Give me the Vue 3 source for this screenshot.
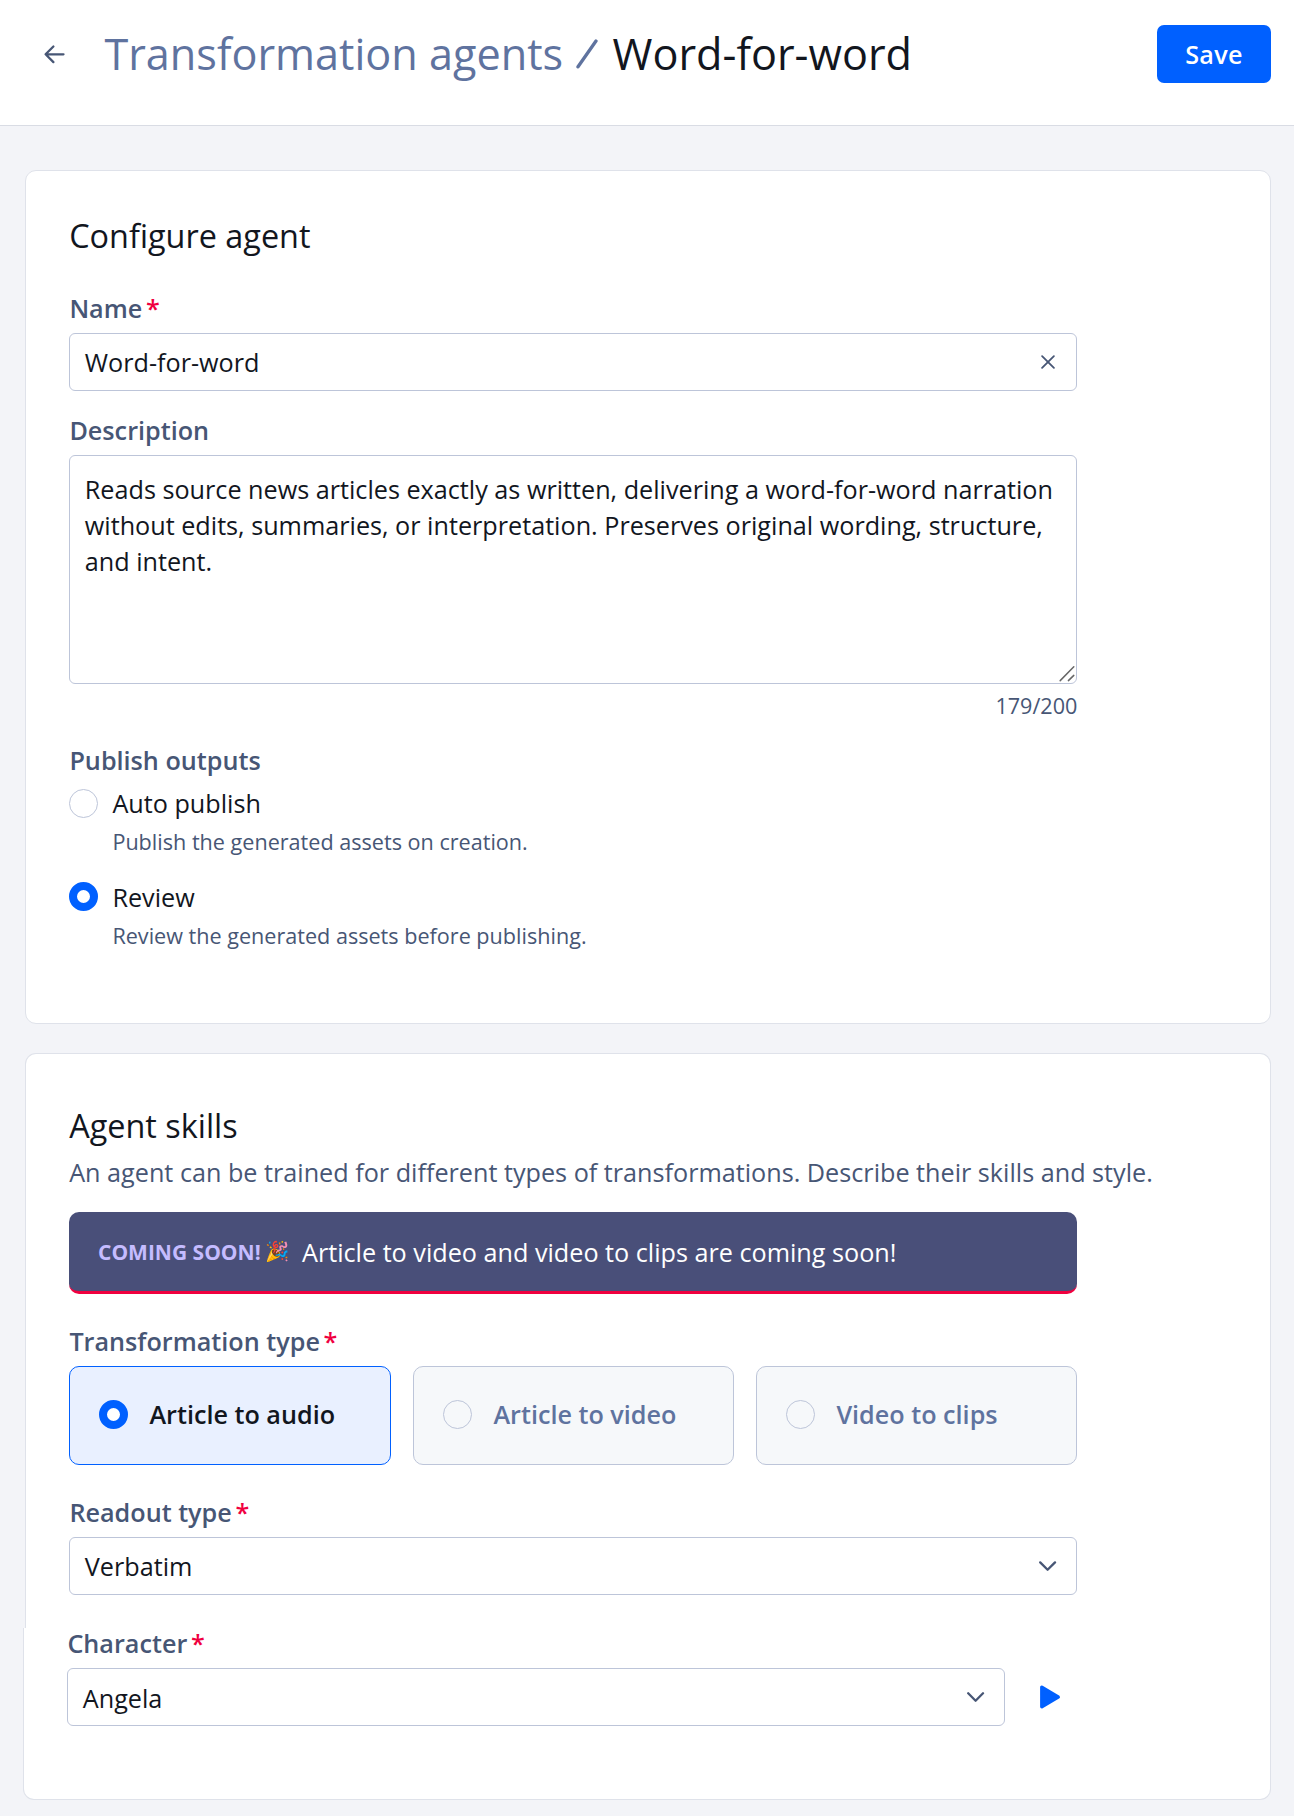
<script setup>
import { ref } from 'vue'

const name = ref('Word-for-word')
const description = ref(
  'Reads source news articles exactly as written, delivering a word-for-word narration without edits, summaries, or interpretation. Preserves original wording, structure, and intent.'
)

const publish = ref('review')
const publishOptions = [
  { id: 'auto', label: 'Auto publish', hint: 'Publish the generated assets on creation.' },
  { id: 'review', label: 'Review', hint: 'Review the generated assets before publishing.' }
]

const transformation = ref('audio')
const transformations = [
  { id: 'audio', label: 'Article to audio' },
  { id: 'video', label: 'Article to video' },
  { id: 'clips', label: 'Video to clips' }
]
</script>

<template>
  <div class="page">
    <header class="header">
      <svg class="back" width="24" height="24" viewBox="0 0 24 24">
        <path d="M21.5 12.3H3.6M11.4 4.5L3.6 12.3l7.8 7.8" />
      </svg>
      <h1 class="title">
        <span class="crumb">Transformation agents</span>
        <svg class="slash" width="22" height="30" viewBox="0 0 22 30">
          <path d="M2 27.8L20 2" />
        </svg>
        <span>Word-for-word</span>
      </h1>
      <button class="save">Save</button>
    </header>

    <main class="content">
      <section class="card configure">
        <h2>Configure agent</h2>
        <div class="label first">Name<span class="req">*</span></div>
        <div class="field">
          <span>{{ name }}</span>
          <svg class="clear" width="14" height="14" viewBox="0 0 14 14">
            <path d="M1.1 1.1l11.8 11.8M12.9 1.1L1.1 12.9" />
          </svg>
        </div>
        <div class="label desc-label">Description</div>
        <div class="area">
          {{ description }}
          <svg class="grip" width="16" height="17" viewBox="0 0 16 17">
            <path d="M1.2 15.6L14.8 1.8M9.4 15.6l5.4-5.2" />
          </svg>
        </div>
        <div class="counter">{{ description.length }}/200</div>

        <div class="label publish-label">Publish outputs</div>
        <div v-for="o in publishOptions" :key="o.id" class="option" @click="publish = o.id">
          <span class="radio" :class="{ on: publish === o.id }"></span>
          <div>
            <div class="option-label">{{ o.label }}</div>
            <div class="option-hint">{{ o.hint }}</div>
          </div>
        </div>
      </section>

      <section class="card skills">
        <h2>Agent skills</h2>
        <p class="sub">An agent can be trained for different types of transformations. Describe their skills and style.</p>
        <div class="banner">
          <span class="soon">COMING SOON!</span>
          <span class="party">🎉</span>
          <span class="news">Article to video and video to clips are coming soon!</span>
        </div>
        <div class="label type-label">Transformation type<span class="req">*</span></div>
        <div class="types">
          <div v-for="t in transformations" :key="t.id" class="type" :class="{ active: transformation === t.id }">
            <span class="radio" :class="{ on: transformation === t.id }"></span>
            <span>{{ t.label }}</span>
          </div>
        </div>
        <div class="label type-label">Readout type<span class="req">*</span></div>
        <div class="field">
          <span>Verbatim</span>
          <svg class="chevron" width="18" height="12" viewBox="0 0 18 12">
            <path d="M1.2 2.4l7.4 7.4L16 2.4" />
          </svg>
        </div>
      </section>

      <section class="card character">
        <div class="label">Character<span class="req">*</span></div>
        <div class="row">
          <div class="field">
            <span>Angela</span>
            <svg class="chevron" width="18" height="12" viewBox="0 0 18 12">
              <path d="M1.2 2.3l7.4 7.4L16 2.3" />
            </svg>
          </div>
          <svg class="play" width="20" height="24" viewBox="0 0 20 24">
            <path d="M1.8 2.2v19.6L18.2 12z" />
          </svg>
        </div>
      </section>
    </main>
  </div>
</template>

<style>
body {
  margin: 0;
  background: #f3f4f8;
}
</style>

<style scoped>
.page {
  min-height: 1816px;
  background: #f3f4f8;
  color: #12161e;
  font-family: "Open Sans", sans-serif;
  font-size: 25.2px;
  line-height: 36px;
  box-sizing: border-box;
}
.page * {
  box-sizing: border-box;
}
svg {
  display: block;
  flex: none;
  fill: none;
  stroke-linecap: round;
  stroke-linejoin: round;
}
.header {
  display: flex;
  align-items: center;
  height: 126px;
  padding: 25px 23px 42px 42px;
  border-bottom: 1px solid #d9dce4;
  background: #fff;
}
.back {
  stroke: #475675;
  stroke-width: 2.3;
}
.title {
  display: flex;
  align-items: center;
  margin: 0 0 0 38.4px;
  font-size: 43.2px;
  font-weight: 400;
  line-height: 58px;
  white-space: nowrap;
}
.crumb {
  color: #5f739f;
}
.slash {
  margin: 0 14.6px 0 12.8px;
  stroke: #5f739f;
  stroke-width: 3.3;
}
.save {
  width: 114px;
  height: 58px;
  margin-left: auto;
  padding: 0;
  border: 0;
  border-radius: 7px;
  background: #0060ff;
  color: #fff;
  font: 600 25.2px/36px "Open Sans", sans-serif;
  letter-spacing: 0.3px;
}
.content {
  padding: 44px 23px 16px 25px;
}
.card {
  border: 1px solid #dfe2ea;
  border-radius: 11px;
  background: #fff;
  padding: 0 0 0 43px;
}
h2 {
  margin: 0 0 0 0.2px;
  font-size: 32.4px;
  font-weight: 400;
  line-height: 44px;
}
.configure {
  height: 854px;
  padding-top: 42px;
}
.label {
  margin-bottom: 7px;
  padding-left: 0.4px;
  color: #475675;
  font-weight: 600;
}
.label.first {
  margin-top: 33px;
}
.req {
  margin-left: 3.6px;
  color: #f0003f;
}
.field {
  display: flex;
  align-items: center;
  justify-content: space-between;
  width: 1008px;
  height: 58px;
  padding: 0 19.5px 0 14.8px;
  border: 1px solid #bdc5d9;
  border-radius: 6px;
  background: #fff;
}
.clear {
  margin-right: 1.5px;
  stroke: #475675;
  stroke-width: 1.8;
}
.chevron {
  stroke: #475675;
  stroke-width: 2.3;
}
.desc-label {
  margin-top: 21px;
}
.area {
  position: relative;
  width: 1008px;
  height: 229px;
  padding: 15px 14.8px 0;
  border: 1px solid #bdc5d9;
  border-radius: 6px;
}
.grip {
  position: absolute;
  right: 1px;
  bottom: 1px;
  stroke: #666;
  stroke-width: 1.5;
}
.counter {
  width: 1008.4px;
  margin-top: 7px;
  color: #475675;
  font-size: 21.6px;
  line-height: 29px;
  text-align: right;
}
.publish-label {
  margin-top: 22px;
}
.option {
  display: flex;
  gap: 14.4px;
  margin-bottom: 23px;
}
.radio {
  flex: none;
  width: 29px;
  height: 29px;
  border: 1px solid #bdc5d9;
  border-radius: 50%;
}
.option .radio {
  margin-top: 3px;
}
.publish-label + .option .radio {
  margin-top: 4px;
}
.radio.on {
  border: 8px solid #0060ff;
  background: #fff;
}
.option-hint {
  margin-top: 6px;
  color: #475675;
  font-size: 21.6px;
  line-height: 29px;
}
.skills {
  height: 575px;
  margin-top: 29px;
  padding-top: 49px;
  border-bottom: 0;
  border-radius: 11px 11px 0 0;
}
.sub {
  margin: 7px 0 22px 0.2px;
  color: #475675;
}
.banner {
  display: flex;
  align-items: center;
  width: 1008px;
  height: 82px;
  padding-left: 29px;
  border-bottom: 3px solid #f0003f;
  border-radius: 10px;
  background: #494f79;
  color: #fff;
}
.soon {
  color: #c5bcff;
  font-size: 21px;
  font-weight: 700;
}
.party {
  margin-left: 4.5px;
  padding-bottom: 1px;
  font-size: 19.5px;
}
.news {
  margin-left: 12.8px;
}
.type-label {
  margin-top: 29px;
}
.types {
  display: grid;
  grid-template-columns: 322px 321px 321px;
  gap: 22px;
  width: 1008px;
}
.type {
  display: flex;
  align-items: center;
  gap: 21.4px;
  height: 99px;
  padding: 0 0 3px 29px;
  border: 1px solid #bdc5d9;
  border-radius: 10px;
  background: #f6f8fa;
  color: #5f739f;
  font-weight: 600;
}
.type.active {
  border-color: #0060ff;
  background: #e9f0ff;
  color: #12161e;
}
.character {
  height: 172px;
  margin-left: -2px;
  border-top: 0;
  border-radius: 0 0 11px 11px;
}
.character .label {
  position: relative;
  top: -3px;
  margin-bottom: 4px;
}
.row {
  display: flex;
  align-items: center;
}
.row .field {
  width: 938px;
}
.row .field span {
  padding-top: 2px;
}
.play {
  margin-left: 35px;
  fill: #0060ff;
  stroke: #0060ff;
  stroke-width: 3.4;
}
</style>
